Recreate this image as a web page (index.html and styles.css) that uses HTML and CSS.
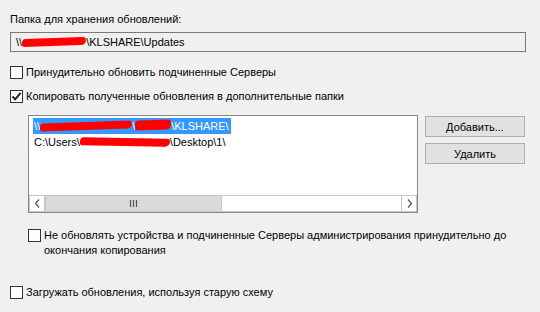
FILE: index.html
```html
<!DOCTYPE html>
<html lang="ru">
<head>
  <meta charset="UTF-8" />
  <title>Параметры обновлений</title>
  <link rel="stylesheet" href="styles.css">
</head>
<body>
  <div class="dialog">
    <div class="label">Папка для хранения обновлений:</div>
    <div class="textbox">\\<span class="scribble s1"></span>\KLSHARE\Updates</div>

    <label class="check row-force">
      <span class="box"></span>
      <span class="text">Принудительно обновить подчиненные Серверы</span>
    </label>

    <label class="check row-copy">
      <span class="box checked">
        <svg width="11" height="11" viewBox="0 0 11 11"><path d="M1.5 5.5 L4.2 8.3 L9.6 1.8" fill="none" stroke="#222" stroke-width="2"/></svg>
      </span>
      <span class="text">Копировать полученные обновления в дополнительные папки</span>
    </label>

    <div class="folders">
      <div class="listbox">
        <div class="items">
          <div class="item selected">\\<span class="scribble s2"></span>\<span class="scribble s3"></span>\KLSHARE\</div>
          <div class="item">C:\Users\<span class="scribble s4"></span>\Desktop\1\</div>
        </div>
        <div class="hscroll">
          <span class="arrow">
            <svg width="7" height="9" viewBox="0 0 7 9"><path d="M5 0.5 L1.5 4.5 L5 8.5" fill="none" stroke="#555" stroke-width="1.2"/></svg>
          </span>
          <span class="track">
            <span class="thumb">
              <svg width="9" height="7" viewBox="0 0 9 7"><path d="M1.5 0V7M4.5 0V7M7.5 0V7" stroke="#555" stroke-width="1.2"/></svg>
            </span>
          </span>
          <span class="arrow">
            <svg width="7" height="9" viewBox="0 0 7 9"><path d="M2 0.5 L5.5 4.5 L2 8.5" fill="none" stroke="#555" stroke-width="1.2"/></svg>
          </span>
        </div>
      </div>
      <div class="buttons">
        <button class="btn">Добавить...</button>
        <button class="btn">Удалить</button>
      </div>
    </div>

    <label class="check row-wait">
      <span class="box"></span>
      <span class="text">Не обновлять устройства и подчиненные Серверы администрирования принудительно до окончания копирования</span>
    </label>

    <label class="check row-old">
      <span class="box"></span>
      <span class="text">Загружать обновления, используя старую схему</span>
    </label>
  </div>
</body>
</html>
```

FILE: styles.css
```css
body {
  margin: 0;
  background: #f0f0f0;
  font-family: "Liberation Sans", Arial, sans-serif;
  font-size: 11px;
  color: #000;
}

.dialog {
  padding: 13px 14px 0 10px;
}

.label {
  line-height: 13px;
}

.textbox {
  margin-top: 6px;
  height: 18px;
  border: 1px solid #7a7a7a;
  line-height: 18px;
  padding-left: 5px;
  white-space: nowrap;
}

.scribble {
  display: inline-block;
  height: 8px;
  background: #ff0000;
  border-radius: 4px 3px 5px 2px;
  vertical-align: 0;
  transform: rotate(-2deg);
}

.s1 { width: 64px; }
.s2 { width: 92px; }
.s3 { width: 36px; height: 10px; }
.s4 { width: 90px; transform: rotate(1deg); }

.check {
  display: flex;
  align-items: flex-start;
  gap: 3px;
  line-height: 15px;
}

.box {
  flex: none;
  width: 11px;
  height: 11px;
  margin-top: 1px;
  border: 1px solid #333;
  background: #fff;
  display: flex;
  align-items: center;
  justify-content: center;
}

.row-force {
  margin-top: 13px;
}

.row-copy {
  margin-top: 9px;
}

.folders {
  display: flex;
  align-items: flex-start;
  gap: 7px;
  margin-top: 11px;
  margin-left: 18px;
}

.listbox {
  width: 388px;
  height: 96px;
  border: 1px solid #828790;
  background: #fff;
  display: flex;
  flex-direction: column;
}

.items {
  flex: 1;
  padding: 2px 0 0 5px;
}

.item {
  height: 16px;
  line-height: 16px;
  padding: 0 2px 0 0;
  white-space: nowrap;
}

.items .item {
  display: block;
  width: max-content;
}

.selected {
  background: #3399ff;
  color: #fff;
  padding-left: 1px;
  margin-left: -1px;
}

.hscroll {
  height: 17px;
  display: flex;
  background: #f0f0f0;
  border-top: 1px solid #fff;
}

.arrow {
  width: 16px;
  display: flex;
  align-items: center;
  justify-content: center;
  background: #fff;
  border: 1px solid #c8c8c8;
  box-sizing: border-box;
}

.track {
  flex: 1;
  background: #fff;
  display: flex;
  border-top: 1px solid #c8c8c8;
  border-bottom: 1px solid #c8c8c8;
}

.thumb {
  width: 175px;
  background: #dadada;
  border: 1px solid #c8c8c8;
  border-width: 0 1px;
  display: flex;
  align-items: center;
  justify-content: center;
}

.buttons {
  display: flex;
  flex-direction: column;
  gap: 6px;
  margin-top: 1px;
}

.btn {
  width: 100px;
  height: 21px;
  background: #e1e1e1;
  border: 1px solid #adadad;
  font-family: inherit;
  font-size: 11px;
  color: #000;
  padding: 0;
}

.row-wait {
  margin-top: 15px;
  margin-left: 18px;
  width: 490px;
}

.row-old {
  margin-top: 27px;
}
```
